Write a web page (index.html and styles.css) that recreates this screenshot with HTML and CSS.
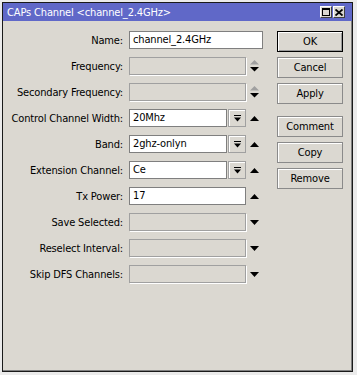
FILE: index.html
```html
<!DOCTYPE html>
<html>
<head>
<meta charset="utf-8">
<link rel="stylesheet" href="styles.css">
</head>
<body>
<div class="window">
  <div class="titlebar">
    <span class="title">CAPs Channel &lt;channel_2.4GHz&gt;</span>
    <div class="tbtns">
      <span class="tbtn"><svg width="8" height="8" viewBox="0 0 8 8"><rect x="0.5" y="0.5" width="7" height="7" fill="none" stroke="#000"/><rect x="0" y="0" width="8" height="2" fill="#000"/></svg></span>
      <span class="tbtn"><svg width="8" height="7" viewBox="0 0 8 7"><path d="M0.5 0.5 L7.5 6.5 M7.5 0.5 L0.5 6.5" stroke="#000" stroke-width="1.8" fill="none"/></svg></span>
    </div>
  </div>
  <div class="content">
    <div class="form">
      <div class="row"><span class="lbl">Name:</span><div class="field"><div class="input wide">channel_2.4GHz</div></div></div>
      <div class="row"><span class="lbl">Frequency:</span><div class="field"><div class="input dis"></div><span class="arrow"><svg width="9" height="12" viewBox="0 0 9 12"><polygon points="4.5,0 0,4.5 9,4.5" fill="#a0a0a0"/><polygon points="0,7 9,7 4.5,11.5" fill="#000"/></svg></span></div></div>
      <div class="row"><span class="lbl">Secondary Frequency:</span><div class="field"><div class="input dis"></div><span class="arrow"><svg width="9" height="12" viewBox="0 0 9 12"><polygon points="4.5,0 0,4.5 9,4.5" fill="#a0a0a0"/><polygon points="0,7 9,7 4.5,11.5" fill="#000"/></svg></span></div></div>
      <div class="row"><span class="lbl">Control Channel Width:</span><div class="field"><div class="combo"><div class="input">20Mhz</div><span class="cbtn"><svg width="7" height="7" viewBox="0 0 7 7"><rect x="0" y="0" width="7" height="1" fill="#000"/><polygon points="0,2.5 7,2.5 3.5,6.5" fill="#000"/></svg></span></div><span class="arrow"><svg width="9" height="5" viewBox="0 0 9 5"><polygon points="4.5,0 0,5 9,5" fill="#000"/></svg></span></div></div>
      <div class="row"><span class="lbl">Band:</span><div class="field"><div class="combo"><div class="input">2ghz-onlyn</div><span class="cbtn"><svg width="7" height="7" viewBox="0 0 7 7"><rect x="0" y="0" width="7" height="1" fill="#000"/><polygon points="0,2.5 7,2.5 3.5,6.5" fill="#000"/></svg></span></div><span class="arrow"><svg width="9" height="5" viewBox="0 0 9 5"><polygon points="4.5,0 0,5 9,5" fill="#000"/></svg></span></div></div>
      <div class="row"><span class="lbl">Extension Channel:</span><div class="field"><div class="combo"><div class="input">Ce</div><span class="cbtn"><svg width="7" height="7" viewBox="0 0 7 7"><rect x="0" y="0" width="7" height="1" fill="#000"/><polygon points="0,2.5 7,2.5 3.5,6.5" fill="#000"/></svg></span></div><span class="arrow"><svg width="9" height="5" viewBox="0 0 9 5"><polygon points="4.5,0 0,5 9,5" fill="#000"/></svg></span></div></div>
      <div class="row"><span class="lbl">Tx Power:</span><div class="field"><div class="input">17</div><span class="arrow"><svg width="9" height="5" viewBox="0 0 9 5"><polygon points="4.5,0 0,5 9,5" fill="#000"/></svg></span></div></div>
      <div class="row"><span class="lbl">Save Selected:</span><div class="field"><div class="input dis"></div><span class="arrow"><svg width="9" height="5" viewBox="0 0 9 5"><polygon points="0,0 9,0 4.5,5" fill="#000"/></svg></span></div></div>
      <div class="row"><span class="lbl">Reselect Interval:</span><div class="field"><div class="input dis"></div><span class="arrow"><svg width="9" height="5" viewBox="0 0 9 5"><polygon points="0,0 9,0 4.5,5" fill="#000"/></svg></span></div></div>
      <div class="row"><span class="lbl">Skip DFS Channels:</span><div class="field"><div class="input dis"></div><span class="arrow"><svg width="9" height="5" viewBox="0 0 9 5"><polygon points="0,0 9,0 4.5,5" fill="#000"/></svg></span></div></div>
    </div>
    <div class="buttons">
      <div class="btn default">OK</div>
      <div class="btn">Cancel</div>
      <div class="btn">Apply</div>
      <div class="sep"></div>
      <div class="btn">Comment</div>
      <div class="btn">Copy</div>
      <div class="btn">Remove</div>
    </div>
  </div>
</div>
</body>
</html>
```
FILE: styles.css
```css
* { box-sizing: border-box; }
html, body { margin: 0; padding: 0; }
body {
  background: #ebebeb;
  font-family: "DejaVu Sans Condensed", "DejaVu Sans", sans-serif;
  font-size: 11px;
  letter-spacing: -0.15px;
  color: #000;
  width: 357px;
  height: 375px;
  overflow: hidden;
}
.window {
  margin: 2px 0 0 2px;
  width: 351px;
  height: 370px;
  border: 1px solid #1a1a1a;
  background: #dbd8d1;
  box-shadow: inset -1px -1px 0 #808080;
  display: flex;
  flex-direction: column;
}
.titlebar {
  height: 18px;
  background: #6068c8;
  color: #fff;
  display: flex;
  align-items: center;
  padding: 0 7px 0 4px;
}
.title { flex: 1; white-space: nowrap; }
.tbtns { display: flex; gap: 1px; }
.tbtn {
  width: 12px;
  height: 12px;
  background: #dbd8d1;
  border: 1px solid;
  border-color: #fff #404040 #404040 #fff;
  display: flex;
  align-items: center;
  justify-content: center;
}
.content { display: flex; padding-top: 10px; }
.form { display: flex; flex-direction: column; gap: 8px; width: 260px; }
.row { display: flex; align-items: center; height: 18px; gap: 6px; }
.lbl { width: 120px; flex: none; text-align: right; white-space: nowrap; }
.field { display: flex; align-items: center; gap: 4px; }
.input {
  height: 18px;
  width: 117px;
  border: 1px solid #7f7f7f;
  background: #fff;
  padding-left: 3px;
  line-height: 16px;
  white-space: nowrap;
  overflow: hidden;
}
.input.wide { width: 134px; }
.input.dis {
  background: transparent;
  border-color: #a0a0a0;
  box-shadow: 1px 1px 0 #fff;
}
.combo { display: flex; gap: 1px; }
.combo .input { width: 98px; }
.cbtn {
  width: 18px;
  height: 18px;
  border: 1px solid #a0a0a0;
  box-shadow: inset 1px 1px 0 #fff;
  display: flex;
  align-items: center;
  justify-content: center;
}
.arrow { width: 9px; display: flex; align-items: center; justify-content: center; }
.buttons { margin-left: 14px; display: flex; flex-direction: column; gap: 5px; width: 66px; }
.btn {
  height: 21px;
  border: 1px solid #8a8a8a;
  box-shadow: inset 1px 1px 0 #fff;
  display: flex;
  align-items: center;
  justify-content: center;
}
.btn.default { border-color: #000; box-shadow: inset 1px 1px 0 #fff, inset -1px -1px 0 #9a9a9a; }
.sep { height: 2px; }
```
